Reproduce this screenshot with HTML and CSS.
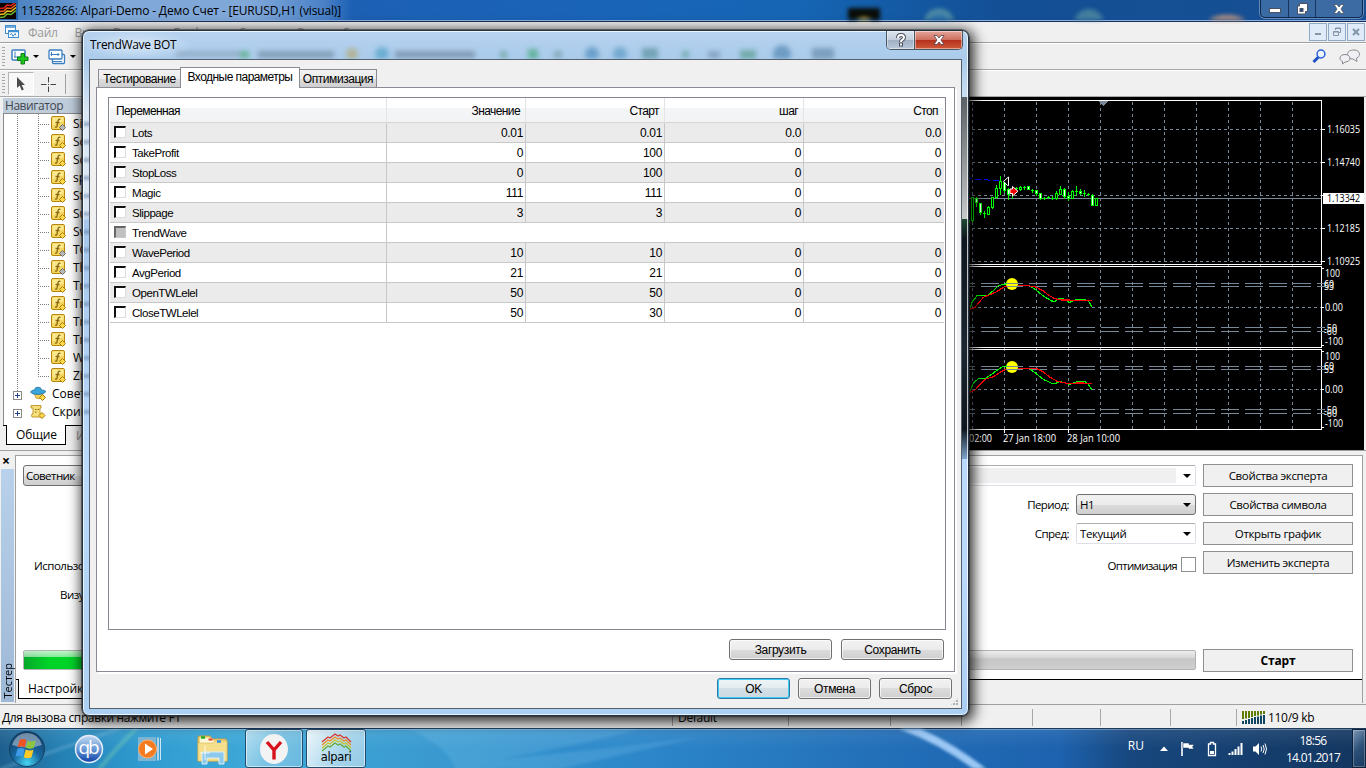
FILE: index.html
```html
<!DOCTYPE html>
<html lang="ru">
<head>
  <meta charset="UTF-8">
  <title>TrendWave BOT</title>
  <link rel="stylesheet" href="styles.css">
</head>
<body>
  <svg class="sprite">
    <symbol id="fx" viewBox="0 0 16 16">
      <rect x=".5" y=".5" width="13" height="13" rx="1.500" fill="#f3d45c" stroke="#b8860b"/>
      <path d="M1.500 1.500h11v4l-11 4z" fill="#fbe88f"/>
      <path d="M9.500 3.500q-2-1-2.500 1.500l-1 5q-.4 1.600-2 1M4.500 6.500h4" fill="none" stroke="#8a6a10" stroke-width="1.300"/>
      <path d="M11.500 8.500l3 3-3 3-3-3z" fill="#ffd94a" stroke="#a87c08"/>
    </symbol>
    <symbol id="fxg" viewBox="0 0 16 16">
      <rect x=".5" y=".5" width="13" height="13" rx="1.500" fill="#f3d45c" stroke="#b8860b"/>
      <path d="M1.500 1.500h11v4l-11 4z" fill="#fbe88f"/>
      <path d="M9.500 3.500q-2-1-2.500 1.500l-1 5q-.4 1.600-2 1M4.500 6.500h4" fill="none" stroke="#8a6a10" stroke-width="1.300"/>
      <path d="M11.500 8.500l3 3-3 3-3-3z" fill="#b9b9b9" stroke="#707070"/>
    </symbol>
  </svg>

  <div class="desktop">
    <!-- terminal window -->
    <div class="titlebar">
      <svg class="logo" width="16" height="16" viewBox="0 0 16 16">
        <rect width="16" height="16" fill="#100400"/>
        <g fill="none" stroke-width="1.500">
          <path d="M0 5.500l4-.5 3-3 4 .5 5-3.500" stroke="#e2231a"/>
          <path d="M0 8.500l4-.5 3-3 4 .5 5-4" stroke="#f0621e"/>
          <path d="M0 11.500l4-.5 3-3 4 .5 5-4" stroke="#e5c51f"/>
          <path d="M0 14.500l4-.5 3-3 4 .5 5-4" stroke="#69b52d"/>
        </g>
      </svg>
      <span class="title">11528266: Alpari-Demo - Демо Счет - [EURUSD,H1 (visual)]</span>
      <svg class="blobs" width="520" height="20" viewBox="700 0 520 20">
        <rect x="848" y="8" width="32" height="16" fill="#0a0d08"/>
        <path d="M856 20q8-6 16 0z" fill="#c9a63a"/>
        <circle cx="939" cy="24" r="13" fill="#3b7fae" stroke="#5f9aa5" stroke-width="5" opacity=".8"/>
        <circle cx="1089" cy="24" r="15" fill="#4f8aa0" opacity=".8"/>
      </svg>
      <svg class="blobs next" width="60" height="20" viewBox="1200 0 60 20">
        <ellipse cx="1227" cy="26" rx="22" ry="11" fill="#b8927e"/>
      </svg>
      <div class="winbtns">
        <span class="wb-min"><svg width="12" height="12"><rect x=".5" y="5.500" width="11" height="4" fill="#fff" stroke="#4a5362"/></svg></span>
        <span class="wb-max"><svg width="12" height="12"><path d="M3.500 .5h8v8h-2v2.500h-8v-8h2z" fill="#fff" stroke="#4a5362"/><rect x="4" y="5.500" width="3" height="3" fill="#1f4a86" stroke="#4a5362"/></svg></span>
        <span class="wb-close"><svg width="12" height="12"><path d="M1 1.500h3l2 2.500 2-2.500h3l-3 4.500 3 4.500h-3l-2-2.500-2 2.500h-3l3-4.500z" fill="#fff" stroke="#4a5362" stroke-width=".8"/></svg></span>
      </div>
    </div>

    <div class="menubar">
      <svg width="16" height="16" viewBox="0 0 16 16"><g fill="#fff" stroke="#3f8fd2"><rect x="1.500" y="1.500" width="10" height="8"/><rect x="4.500" y="6.500" width="10" height="7"/></g><path d="M1 3h11M4 7.500h11" stroke="#3f8fd2" stroke-width="1.500"/><path d="M6 11l1.500-1.500 1.500 3 2-3 1 2" fill="none" stroke="#3f8fd2"/></svg>
      <nav>
        <span>Файл</span><span>Вид</span><span>Вставка</span><span>Графики</span><span>Сервис</span><span>Окно</span><span>Справка</span>
      </nav>
      <div class="mdi">
        <span><svg width="10" height="10"><rect x="2" y="6" width="6" height="2" fill="#8496a8"/></svg></span>
        <span><svg width="10" height="10"><path d="M3.500 3v-2h5v4.500h-2M1.500 4.500h5v4h-5zM3 1.500h6M1 5h6" fill="none" stroke="#8496a8"/></svg></span>
        <span><svg width="10" height="10"><path d="M2 2l6 6M8 2l-6 6" stroke="#8496a8" stroke-width="2"/></svg></span>
      </div>
    </div>

    <div class="toolbar">
      <i class="grip"></i>
      <svg width="18" height="16" viewBox="0 0 18 16"><rect x="1" y="1" width="13" height="10" rx="1" fill="#fff" stroke="#3b7fc0" stroke-width="1.500"/><path d="M4 2.500v6M3 8h8" stroke="#3b7fc0"/><path d="M10 4.500h3.500v3.500h3.500v3.500h-3.500v3.500H10v-3.500H6.500V8H10z" fill="#22c41f" stroke="#0a7d12"/></svg>
      <i class="drop"></i>
      <svg class="gap" width="18" height="16" viewBox="0 0 18 16"><g fill="#fff" stroke="#3b7fc0" stroke-width="1.300"><rect x="4.500" y="5.500" width="12" height="9" rx="1"/><rect x="1" y="1" width="13" height="9" rx="1"/></g><path d="M3.500 3v4M2.500 5.500h9M10 4v3M5 12.500h9" stroke="#3b7fc0"/></svg>
      <i class="drop"></i>
      <div class="right-tools">
        <svg width="15" height="15" viewBox="0 0 15 15"><path d="M7 7.500l-5.500 5.500" stroke="#1d4fc4" stroke-width="3"/><circle cx="9" cy="5" r="3.900" fill="#eef5ff" stroke="#2a62d8" stroke-width="1.500"/></svg>
        <svg width="22" height="16" viewBox="0 0 22 16"><g fill="#f0f0f4" stroke="#8a8a8f"><path d="M15 1c-4 0-6.500 1.500-6.500 4.500S11 10 14 10l4 2.500-.5-3.500c2-.8 3-2 3-3.500C20.500 2.500 18.500 1 15 1z"/><path d="M6 5.500c-3 0-5 1.500-5 3.800 0 1.500 1 2.600 2.500 3l0 2.700 2.500-2c3 0 5-1.500 5-3.700S9 5.500 6 5.500z"/></g></svg>
      </div>
    </div>
    <div class="toolbar second">
      <i class="grip"></i>
      <span class="pressed"><svg width="12" height="16" viewBox="0 0 12 16"><path d="M2 1v11l2.600-2.400L6.800 14.500l2-1L6.700 9H10z" fill="#4a4a4a"/></svg></span>
      <svg class="cross" width="16" height="16"><path d="M8.500 1v5.500M8.500 10.500V16M1 8.500h5.500M10.500 8.500H16M8 8.500h1" stroke="#444"/></svg>
      <i class="sep"></i>
    </div>

    <div class="main">
      <div class="navigator">
        <div class="nav-head">Навигатор</div>
        <div class="tree">
          <div class="leaf"><svg><use href="#fxg"/></svg>Si</div>
          <div class="leaf"><svg><use href="#fx"/></svg>Sc</div>
          <div class="leaf"><svg><use href="#fx"/></svg>Sc</div>
          <div class="leaf"><svg><use href="#fx"/></svg>sp</div>
          <div class="leaf"><svg><use href="#fx"/></svg>St</div>
          <div class="leaf"><svg><use href="#fx"/></svg>Su</div>
          <div class="leaf"><svg><use href="#fx"/></svg>Sw</div>
          <div class="leaf"><svg><use href="#fxg"/></svg>TC</div>
          <div class="leaf"><svg><use href="#fxg"/></svg>Th</div>
          <div class="leaf"><svg><use href="#fx"/></svg>Tr</div>
          <div class="leaf"><svg><use href="#fx"/></svg>Tr</div>
          <div class="leaf"><svg><use href="#fx"/></svg>Tr</div>
          <div class="leaf"><svg><use href="#fx"/></svg>Tr</div>
          <div class="leaf"><svg><use href="#fx"/></svg>W</div>
          <div class="leaf"><svg><use href="#fx"/></svg>Zi</div>
          <div class="branch"><i></i>
            <svg width="17" height="16" viewBox="0 0 17 16"><path d="M4 7q4 3 9 0l-1 4q-3 3-6 1z" fill="#f5cf55" stroke="#b58712" stroke-width=".7"/><path d="M.5 6Q2 3.500 4.500 4 5 .7 8 1.200q3-.4 3.500 2.800 3-.2 4.500 1.500-2 3-8 3T.5 6z" fill="#39a3da" stroke="#1b6c9c" stroke-width=".7"/><path d="M12.500 8.500l3 3-3 3-3-3z" fill="#ffd94a" stroke="#a87c08"/></svg>Советники</div>
          <div class="branch"><i></i>
            <svg width="17" height="16" viewBox="0 0 17 16"><path d="M1 1.500h10v2.500h-1v6h2v3H2q-1-1.500 0-3h1V4H1z" fill="#f8df7d" stroke="#b58712" stroke-width=".8"/><path d="M5 5.500h1.500M7.500 5.500H9M5 8h1.500" stroke="#8a6a10"/><path d="M12 8.500l3 3-3 3-3-3z" fill="#ffd94a" stroke="#a87c08"/></svg>Скрипты</div>
        </div>
        <div class="nav-tabs"><span class="on">Общие</span><span>И</span></div>
      </div>

      <svg class="chart" width="1164" height="353" viewBox="200 97 1164 353">
        <rect x="200" y="97" width="1164" height="353" fill="#000"/>
        <g class="grid">
          <path d="M972.500 102V430M1004.500 102V430M1036.500 102V430M1068.500 102V430M1100.500 102V430M1132.500 102V430M1164.500 102V430M1196.500 102V430M1228.500 102V430M1260.500 102V430M1292.500 102V430"/>
          <path d="M966 129.500H1321M966 162.500H1321M966 195.500H1321M966 228.500H1321M966 261.500H1321M966 307.500H1321M966 389.500H1321"/>
        </g>
        <path class="price" d="M966 198.500H1321"/>
        <path class="frame" d="M960 100.500H1321.500V264.500H960M960 266.500H1321.500V347.500H960M960 349.500H1321.500V429.500H960"/>
        <path class="frame" d="M1321 129.500h4M1321 162.500h4M1321 195.500h4M1321 228.500h4M1321 261.500h4M1321 268.500h3M1321 307.500h3M1321 345.500h3M1321 351.500h3M1321 389.500h3M1321 427.500h3M1004.500 430v3M1068.500 430v3"/>
        <path d="M1098 101h10l-5 5z" fill="#778899"/>
        <!-- candles -->
        <path d="M966 178.500l36 2.500" stroke="#00f" stroke-dasharray="6 3"/>
        <path class="wick" d="M969.500 220v3M972.500 197v25M976.500 197v10M980.500 203v12M984.500 211v7M988.500 206v9M992.500 197v12M996.500 185v14M1000.500 176v19M1004.500 181v12M1008.500 188v12M1012.500 187v12M1016.500 187v5M1020.500 186v5M1024.500 186v4M1028.500 186v4M1032.500 189v4M1036.500 190v6M1040.500 193v7M1044.500 197v3M1048.500 196v3M1052.500 196v4M1056.500 191v9M1060.500 186v9M1064.500 188v11M1068.500 192v9M1072.500 190v9M1076.500 186v10M1080.500 189v6M1084.500 190v7M1088.500 193v3M1092.500 194v12M1096.500 198v8"/>
        <path class="up" d="M971.500 197.500h2v23h-2zM987.500 207.500h2v7h-2zM991.500 197.500h2v10h-2zM995.500 188.500h2v9h-2zM999.500 181.500h2v7h-2zM1019.500 187.500h2v2h-2zM1055.500 193.500h2v5h-2zM1059.500 189.500h2v5h-2zM1071.500 191.500h2v7h-2zM1095.500 198.500h2v7h-2z"/>
        <path class="down" d="M975.500 198.500h2v4h-2zM979.500 203.500h2v9h-2zM1003.500 182.500h2v8h-2zM1007.500 189.500h2v5h-2zM1027.500 186.500h2v3h-2zM1035.500 190.500h2v3h-2zM1039.500 193.500h2v5h-2zM1063.500 189.500h2v7h-2zM1067.500 196.500h2v2h-2zM1079.500 191.500h2v2h-2zM1091.500 195.500h2v10h-2z"/>
        <path class="wick" d="M983 213.500h3M1015 188.500h3M1023 187.500h3M1031 190.500h3M1043 198.500h3M1047 197.500h3M1051 198.500h3M1075 191.500h3M1083 193.500h3M1087 194.500h3"/>
        <path class="mark" d="M1008.500 177v8.500h-1l-4-4.200z" fill="#000" stroke="#fff"/>
        <path class="mark" d="M1010 189h2.500v-2.500l5.500 4.700-5.500 4.800v-2.500H1010z" fill="#f00000" stroke="#fff"/>
        <!-- oscillators -->
        <circle class="mark" cx="1012" cy="284" r="6" fill="#ff0"/>
        <circle class="mark" cx="1012" cy="367" r="6" fill="#ff0"/>
        <path class="level" d="M957 283.500H1325M957 286.500H1325M957 327.500H1325M957 331.500H1325M957 366.500H1325M957 369.500H1325M957 409.500H1325M957 413.500H1325"/>
        <g class="wave" transform="translate(940 260) scale(.3333)">
          <path stroke="#0f0" d="M90 146L97 125 112 106 130 107 145 105 160 92 175 77 200 71M270 78L285 88 310 108 335 123 345 124 358 115 370 117 388 127 410 119 436 119 446 124 455 140M90 394L100 370 115 356 135 356 155 343 175 328 190 319 200 318M270 327L290 342 310 358 335 370 348 370 358 365 370 367 388 373 410 366 432 364 443 370 455 389"/>
          <path stroke="#f00" d="M90 148L105 142 130 112 150 104 170 95 190 82 200 78M234 77L265 77 290 82 310 93 325 105 345 116 365 120 455 121M90 397L105 390 135 358 160 350 180 337 197 328M234 325L290 326 310 336 330 352 352 364 380 370 420 369 455 370"/>
        </g>
        <rect x="1323" y="193" width="41" height="11" fill="#fff"/>
        <g class="axis">
          <text x="1327" y="133" textLength="33" lengthAdjust="spacingAndGlyphs">1.16035</text>
          <text x="1327" y="166" textLength="33" lengthAdjust="spacingAndGlyphs">1.14740</text>
          <text x="1327" y="202" textLength="33" lengthAdjust="spacingAndGlyphs" fill="#000">1.13342</text>
          <text x="1327" y="232" textLength="33" lengthAdjust="spacingAndGlyphs">1.12185</text>
          <text x="1327" y="265" textLength="33" lengthAdjust="spacingAndGlyphs">1.10925</text>
          <text x="1325" y="277" textLength="15" lengthAdjust="spacingAndGlyphs">100</text>
          <text x="1324" y="288" textLength="10" lengthAdjust="spacingAndGlyphs">60</text>
          <text x="1324" y="290" textLength="10" lengthAdjust="spacingAndGlyphs">53</text>
          <text x="1325" y="311" textLength="18" lengthAdjust="spacingAndGlyphs">0.00</text>
          <text x="1324" y="332" textLength="13" lengthAdjust="spacingAndGlyphs">-50</text>
          <text x="1324" y="335" textLength="13" lengthAdjust="spacingAndGlyphs">-60</text>
          <text x="1325" y="345" textLength="18" lengthAdjust="spacingAndGlyphs">-100</text>
          <text x="1325" y="360" textLength="15" lengthAdjust="spacingAndGlyphs">100</text>
          <text x="1324" y="370" textLength="10" lengthAdjust="spacingAndGlyphs">60</text>
          <text x="1324" y="373" textLength="10" lengthAdjust="spacingAndGlyphs">53</text>
          <text x="1325" y="393" textLength="18" lengthAdjust="spacingAndGlyphs">0.00</text>
          <text x="1324" y="414" textLength="13" lengthAdjust="spacingAndGlyphs">-50</text>
          <text x="1324" y="417" textLength="13" lengthAdjust="spacingAndGlyphs">-60</text>
          <text x="1325" y="427" textLength="18" lengthAdjust="spacingAndGlyphs">-100</text>
          <text x="969" y="442" textLength="23" lengthAdjust="spacingAndGlyphs">02:00</text>
          <text x="1003" y="442" textLength="53" lengthAdjust="spacingAndGlyphs">27 Jan 18:00</text>
          <text x="1067" y="442" textLength="53" lengthAdjust="spacingAndGlyphs">28 Jan 10:00</text>
        </g>
      </svg>
    </div>

    <div class="tester">
      <div class="side"><b>×</b><div class="strip"><span>Тестер</span></div></div>
      <div class="pane">
        <div class="form">
          <div class="fields">
            <div class="row"><span class="select grey kind">Советник</span><span class="select wide"><em></em></span></div>
            <div class="row"><label>Период:</label><span class="select grey">H1</span></div>
            <div class="row"><label>Спред:</label><span class="select">Текущий</span></div>
            <div class="row opt"><span class="left">Использовать дату</span><label>Оптимизация</label><i class="box"></i></div>
            <div class="row vis"><span class="left">Визуализация</span></div>
            <div class="progress"><div class="done"></div></div>
          </div>
          <div class="actions">
            <button>Свойства эксперта</button>
            <button>Свойства символа</button>
            <button>Открыть график</button>
            <button>Изменить эксперта</button>
            <button class="start">Старт</button>
          </div>
        </div>
        <div class="pane-tabs"><span>Настройки</span></div>
      </div>
    </div>

    <div class="status">
      <span class="hint">Для вызова справки нажмите F1</span>
      <span class="c1">Default</span><span class="c2"></span><span class="c3"></span><span class="c4"></span><span class="c5"></span><span class="c6"></span><span class="c7"></span>
      <span class="traffic"><svg width="24" height="14" viewBox="0 0 24 14"><path d="M1 0v8M4 0v7.500M7 0v7M10 0v6M13 0v5M16 0v4.500M19 0v3.500M22 0v3" stroke="#5f7d00" stroke-width="2"/><path d="M1 13v-3M4 13v-4M7 13V8M10 13V7M13 13V6M16 13V5.500M19 13V4.500M22 13V4" stroke="#0f4560" stroke-width="2"/></svg>110/9 kb</span>
    </div>

    <div class="taskbar">
      <svg class="aurora" width="1366" height="40" viewBox="0 0 1366 40" preserveAspectRatio="none">
        <path d="M0 40Q60 20 130 -4" stroke="#9fd0ee" stroke-width="3" opacity=".3" fill="none"/>
        <path d="M96 44Q115 20 140 -4" stroke="#8fe0b0" stroke-width="4" opacity=".35" fill="none"/>
        <path d="M410 0Q450 20 455 40H560L700 8Q560 25 500 30Q600 12 640 0z" fill="#8fd0f5" opacity=".18"/>
        <path d="M900 -4Q945 12 985 44" stroke="#a9d2fb" stroke-width="8" fill="none" opacity=".9"/>
      </svg>
      <span class="orb"><svg width="38" height="38" viewBox="0 0 38 38"><defs><radialGradient id="orb" cx=".5" cy=".9" r=".9"><stop offset="0" stop-color="#46d5f2"/><stop offset=".45" stop-color="#17679f"/><stop offset="1" stop-color="#123a63"/></radialGradient></defs><circle cx="19" cy="19" r="17.500" fill="url(#orb)" stroke="#15405f"/><path d="M4 15Q8 3 19 3t15 12q-15 5-30 0z" fill="#fff" opacity=".4"/><path d="M11.500 10q3.500-2 7 0l-1.700 7.500q-3.500-1.800-7.200 0z" fill="#ee5426"/><path d="M19.700 10.700q3.600 1.800 8-.2l-2 7.500q-3.800 1.700-7.800-.2z" fill="#8cc63f"/><path d="M9.300 19q3.600-1.800 7.200 0l-1.800 7.700q-3.600-1.800-7.200 0z" fill="#3e9be8"/><path d="M17.700 19.500q4 1.800 7.800.2l-2 7.500q-4 1.800-7.700 0z" fill="#ffc926"/></svg></span>
      <span class="qb"><svg width="30" height="30" viewBox="0 0 30 30"><defs><linearGradient id="qb" x1="0" y1="0" x2="0" y2="1"><stop offset="0" stop-color="#c3daf2"/><stop offset=".5" stop-color="#6a9bd8"/><stop offset="1" stop-color="#0d3fa8"/></linearGradient></defs><circle cx="15" cy="15" r="13.500" fill="url(#qb)" stroke="#e8eef7" stroke-width="1.500"/><text x="4.500" y="20" textLength="21" fill="#fff">qb</text></svg></span>
      <span class="wmp"><svg width="28" height="26" viewBox="0 0 28 26"><path d="M1 1h18v24H1z" fill="#7cb4d4"/><path d="M20 1.500h2v23h-2z" fill="#b5d3e4"/><path d="M23.500 2v22" stroke="#cbe6f5"/><circle cx="10.500" cy="13" r="9" fill="#f47b20" stroke="#ffb071"/><path d="M8 7.500v11l8-5.500z" fill="#fff"/></svg></span>
      <span class="folder"><svg width="34" height="32" viewBox="0 0 34 32"><path d="M2 28V5q0-2 2-2h10l2 3h13q2 0 2 3v19z" fill="#f2d57a" stroke="#c9a144"/><path d="M4 5h12l1 3h12v17H4z" fill="#fff7d6"/><path d="M2 10h15l2-2h12v20H2z" fill="#f6df8c" stroke="#d8b557" stroke-width=".6"/><path d="M5 4.500h4" stroke-width="2.500" stroke="#1eab2b"/><path d="M12.500 6.500h4" stroke="#e0382c" stroke-width="2"/><path d="M21 8.500h4" stroke="#2c8fe8" stroke-width="2.500"/><path d="M6 31V20q0-1 1-1h20q1 0 1 1v11h-5v-6H11v6z" fill="#8cc9ec" stroke="#d6effb"/><path d="M9 13v14M4 20h10" stroke="#fff" opacity=".8"/></svg></span>
      <span class="task"><svg width="30" height="32" viewBox="0 0 30 32"><ellipse cx="15" cy="16" rx="14" ry="15" fill="#f3f3f3"/><path d="M8 9l7 8 7-8M15 16v10.500" fill="none" stroke="#d8121b" stroke-width="3.400"/></svg></span>
      <span class="task on"><svg width="32" height="20" viewBox="0 0 32 20"><g fill="none" stroke-width="1.200"><path d="M2 9l6-5 2 1 5-4 3 2 2-1 4 3 2-1 5 5" stroke="#d8352a"/><path d="M2 12l6-5 2 1 5-4 3 2 2-1 4 3 2-1 5 5" stroke="#ee8c22"/><path d="M2 15l6-5 2 1 5-4 3 2 2-1 4 3 2-1 5 5" stroke="#c9c32a"/><path d="M2 18l6-5 2 1 5-4 3 2 2-1 4 3 2-1 5 5" stroke="#64aa35"/></g></svg><em>alpari</em></span>
      <div class="tray">
        <span class="lang">RU</span>
        <svg class="up-arrow" width="8" height="5"><path d="M0 5l4-4.500L8 5z" fill="#fff"/></svg>
        <svg class="flag" width="16" height="16" viewBox="0 0 16 16"><path d="M2 1v14" stroke="#fff" stroke-width="1.600"/><path d="M3 2h6v1.500h5l-1.500 2.500 1.500 2H8.500V7H3z" fill="#fff" stroke="#17375f" stroke-width=".5"/></svg>
        <svg class="battery" width="10" height="16" viewBox="0 0 10 16"><path d="M3.500 1.500h3v1.500h2v11.500h-7V3h2z" fill="none" stroke="#fff" stroke-width="1.300"/><path d="M3 10h4v3H3z" fill="#fff"/></svg>
        <svg class="signal" width="16" height="12" viewBox="0 0 16 12"><path d="M1.500 12v-2M4.500 12V8.500M7.500 12V6M10.500 12V3.500M13.500 12V0" stroke="#fff" stroke-width="2"/></svg>
        <svg class="sound" width="15" height="14" viewBox="0 0 15 14"><path d="M1 4.500h2.500L7 1v12L3.500 9.500H1z" fill="#fff"/><path d="M9 4.500q1.500 2.500 0 5M11 3q2.500 4 0 8M13 1.500q3 5.500 0 11" fill="none" stroke="#fff"/></svg>
        <div class="clock"><div>18:56</div><div>14.01.2017</div></div>
        <i class="peek"></i>
      </div>
    </div>

    <!-- expert properties dialog -->
    <div class="dialog">
      <div class="caption">
        <svg class="glass" width="885" height="28" viewBox="83 31 885 28">
          <g opacity=".5">
            <rect x="176" y="51" width="70" height="6" fill="#7f93a8"/><rect x="240" y="51" width="9" height="7" fill="#2a9c4b"/><rect x="258" y="51" width="76" height="7" fill="#5f7286"/>
            <rect x="395" y="51" width="80" height="7" fill="#566a80"/><circle cx="352" cy="54" r="6" fill="#b99a44"/><circle cx="382" cy="54" r="7" fill="#2f8fb8"/>
            <rect x="500" y="51" width="7" height="7" fill="#4d8f78"/><rect x="528" y="49" width="10" height="10" fill="#1f9c55"/><rect x="554" y="51" width="8" height="7" fill="#5c8a86"/>
            <circle cx="592" cy="54" r="7" fill="#2b76ad"/><circle cx="620" cy="54" r="7" fill="#3a86b5"/><rect x="642" y="48" width="16" height="11" fill="#3a7a80"/>
            <rect x="682" y="51" width="7" height="7" fill="#47917a"/><rect x="708" y="51" width="12" height="7" fill="#5f7f99"/><rect x="740" y="50" width="16" height="9" fill="#3b8a6d"/>
            <circle cx="782" cy="54" r="9" fill="#2f6d9b"/><rect x="812" y="48" width="22" height="11" fill="#4d7392"/>
          </g>
        </svg>
        <span>TrendWave BOT</span>
        <div class="capbtns">
          <i class="help"><svg width="12" height="14"><path d="M3 5q0-3 3-3t3 2.500q0 1.500-1.700 2.300Q6 7.500 6 9" fill="none" stroke="#4a4f5c" stroke-width="4"/><rect x="4" y="9.500" width="4" height="4" fill="#4a4f5c"/><path d="M3 5q0-3 3-3t3 2.500q0 1.500-1.700 2.300Q6 7.500 6 9" fill="none" stroke="#fff" stroke-width="2"/><rect x="5" y="10.500" width="2" height="2" fill="#fff"/></svg></i>
          <i class="close"><svg width="12" height="12"><path d="M1 1.500h3l2 2.500 2-2.500h3l-3 4.500 3 4.500h-3l-2-2.500-2 2.500h-3l3-4.500z" fill="#fff" stroke="#52404a" stroke-width=".8"/></svg></i>
        </div>
      </div>
      <div class="client">
        <div class="tabs"><span>Тестирование</span><span class="on">Входные параметры</span><span>Оптимизация</span></div>
        <div class="page">
          <div class="list">
            <div class="tr th"><span>Переменная</span><span>Значение</span><span>Старт</span><span>шаг</span><span>Стоп</span></div>
            <div class="tr"><span><i></i>Lots</span><span>0.01</span><span>0.01</span><span>0.0</span><span>0.0</span></div>
            <div class="tr"><span><i></i>TakeProfit</span><span>0</span><span>100</span><span>0</span><span>0</span></div>
            <div class="tr"><span><i></i>StopLoss</span><span>0</span><span>100</span><span>0</span><span>0</span></div>
            <div class="tr"><span><i></i>Magic</span><span>111</span><span>111</span><span>0</span><span>0</span></div>
            <div class="tr"><span><i></i>Slippage</span><span>3</span><span>3</span><span>0</span><span>0</span></div>
            <div class="tr head"><span><i></i>TrendWave</span></div>
            <div class="tr"><span><i></i>WavePeriod</span><span>10</span><span>10</span><span>0</span><span>0</span></div>
            <div class="tr"><span><i></i>AvgPeriod</span><span>21</span><span>21</span><span>0</span><span>0</span></div>
            <div class="tr"><span><i></i>OpenTWLelel</span><span>50</span><span>50</span><span>0</span><span>0</span></div>
            <div class="tr"><span><i></i>CloseTWLelel</span><span>50</span><span>30</span><span>0</span><span>0</span></div>
          </div>
          <div class="page-btns"><button>Загрузить</button><button>Сохранить</button></div>
        </div>
        <div class="dlg-btns"><button class="ok">OK</button><button>Отмена</button><button>Сброс</button></div>
        <i class="resize"></i>
      </div>
    </div>
  </div>
</body>
</html>
```
FILE: styles.css
```css
* {
  box-sizing: border-box;
}
body {
  margin: 0;
  overflow: hidden;
  font-family: "Open Sans", "Noto Sans", sans-serif;
  font-size: 12px;
  color: #000;
}
svg {
  display: block;
  flex: none;
}
i, em {
  font-style: normal;
}
.sprite {
  position: absolute;
  width: 0;
  height: 0;
}
.desktop {
  position: relative;
  width: 1366px;
  height: 768px;
  overflow: hidden;
  display: flex;
  flex-direction: column;
  background: #f0f0f0;
  white-space: nowrap;
}

/* main window */
.titlebar {
  height: 22px;
  display: flex;
  align-items: flex-start;
  background: linear-gradient(to right, #2162ab, #1c60b4 350px, #1a64b8 600px, #1565b4 800px, #134f95 1000px, #174f92 1366px);
  border-bottom: 1px solid #17305a;
  box-shadow: inset 0 -1px 0 #8fb0dc;
}
.logo {
  margin-top: 3px;
}
.title {
  margin-left: 2px;
  padding: 0 8px 0 3px;
  height: 20px;
  line-height: 21px;
  letter-spacing: -0.15px;
  width: 334px;
  background: linear-gradient(to right, rgba(120,165,215,.5), rgba(165,195,232,.72) 30%, rgba(165,195,232,.72) 70%, rgba(110,155,215,.55) 92%, rgba(100,150,210,0));
}
.blobs {
  margin-left: 348px;
  filter: blur(2px);
}
.blobs.next {
  margin-left: -20px;
}
.winbtns {
  margin-left: auto;
  margin-right: 3px;
  height: 18px;
  display: flex;
  border: 1px solid #10284d;
  border-top: 0;
  border-radius: 0 0 5px 5px;
  background: rgba(255,255,255,.16);
  box-shadow: 0 0 0 1px rgba(160,190,225,.55);
}
.winbtns span {
  display: flex;
  align-items: center;
  justify-content: center;
  border-right: 1px solid #17345f;
  width: 28px;
}
.winbtns .wb-max { width: 27px; }
.winbtns .wb-close { width: 46px; border: 0; }
.menubar {
  height: 21px;
  display: flex;
  align-items: center;
  padding-left: 4px;
  border-bottom: 1px solid #a0a0a0;
  color: #9a9a9a;
}
.menubar nav {
  display: flex;
  gap: 17px;
  margin-left: 8px;
  letter-spacing: -0.3px;
}
.mdi {
  margin-left: auto;
  display: flex;
  gap: 1px;
  padding-right: 1px;
}
.mdi span {
  width: 18px;
  height: 18px;
  border: 1px solid #8fa9c4;
  background: #dfebf8;
  display: flex;
  align-items: center;
  justify-content: center;
}
.toolbar {
  height: 27px;
  display: flex;
  align-items: center;
  padding-left: 2px;
  border-top: 1px solid #fff;
  border-bottom: 1px solid #a8a8a8;
}
.grip {
  width: 3px;
  height: 20px;
  margin-right: 6px;
  background: repeating-linear-gradient(#a8a8a8 0 1px, #f0f0f0 1px 3px);
}
.drop {
  width: 0;
  margin-left: 4px;
  border: 3px solid transparent;
  border-top-color: #000;
  border-bottom: 0;
}
.gap {
  margin-left: 9px;
}
.right-tools {
  margin-left: auto;
  display: flex;
  gap: 12px;
  padding-right: 5px;
}
.pressed {
  width: 26px;
  height: 23px;
  margin-left: -3px;
  display: flex;
  align-items: center;
  justify-content: center;
  border: 1px solid #b5b5b5;
  border-right-color: #fff;
  border-bottom-color: #fff;
  background: #f8f8f8;
}
.cross {
  margin-left: 6px;
}
.sep {
  width: 1px;
  height: 20px;
  margin-left: 9px;
  background: #a0a0a0;
}
.main {
  height: 353px;
  display: flex;
}
.navigator {
  width: 200px;
  height: 353px;
  padding-left: 3px;
  border-top: 1px solid #f8f8f8;
}
.nav-head {
  height: 15px;
  line-height: 15px;
  padding-left: 2px;
  background: #bfcddb;
  color: #3f4750;
  letter-spacing: -0.45px;
}
.tree {
  height: 312px;
  padding-top: 1px;
  background: repeating-linear-gradient(#808080 0 1px, #fff 1px 2px) 13px 0 / 1px 282px no-repeat,
    repeating-linear-gradient(#808080 0 1px, #fff 1px 2px) 34px 0 / 1px 262px no-repeat, #fff;
  border: 1px solid #8a8a8a;
  border-bottom: 0;
}
.leaf, .branch {
  height: 18px;
  line-height: 18px;
  display: flex;
  align-items: center;
}
.leaf::before {
  content: "";
  width: 11px;
  height: 1px;
  margin: 0 2px 0 34px;
  background: repeating-linear-gradient(to right, #808080 0 1px, #fff 1px 2px);
}
.leaf svg {
  width: 16px;
  height: 16px;
  margin-right: 6px;
}
.branch {
  padding-left: 9px;
}
.branch i {
  width: 9px;
  height: 9px;
  margin-top: 2px;
  border: 1px solid #8a8a8a;
  background: linear-gradient(#24418c, #24418c) center / 5px 1px no-repeat,
    linear-gradient(#24418c, #24418c) center / 1px 5px no-repeat, #fff;
}
.branch svg {
  margin: 0 5px 0 8px;
}
.nav-tabs {
  height: 20px;
  display: flex;
  border-top: 1px solid #000;
  line-height: 19px;
  color: #8a8a8a;
}
.nav-tabs span {
  padding-left: 10px;
}
.nav-tabs .on {
  width: 60px;
  height: 20px;
  margin: -1px 0 0 3px;
  padding: 0 0 0 9px;
  color: #000;
  background: #fff;
  border: 1px solid #000;
  border-top: 0;
  letter-spacing: -0.15px;
}

/* chart */
.chart {
  shape-rendering: crispEdges;
}
.grid {
  stroke: #778899;
  stroke-dasharray: 3 3;
}
.price {
  stroke: #778899;
}
.level {
  stroke: #778899;
  stroke-dasharray: 18 6;
  fill: none;
}
.frame {
  stroke: #fff;
  fill: none;
}
.wick, .up, .down {
  stroke: #0f0;
  fill: none;
}
.up { fill: #000; }
.down { fill: #fff; }
.mark {
  shape-rendering: auto;
}
.wave {
  fill: none;
  stroke-width: 3.5;
}
.axis {
  fill: #fff;
  font: 10.5px "Open Sans", "Noto Sans", sans-serif;
}

/* tester */
.tester {
  height: 255px;
  display: flex;
  padding: 4px 3px 0 0;
  border-top: 1px solid #a0a0a0;
  border-bottom: 1px solid #a0a0a0;
}
.side {
  width: 15px;
  display: flex;
  flex-direction: column;
}
.side b {
  height: 14px;
  line-height: 11px;
  padding-left: 2px;
  font-size: 14px;
}
.strip {
  width: 13px;
  height: 233px;
  margin-left: 1px;
  flex: none;
  display: flex;
  align-items: flex-end;
  background: linear-gradient(#b9d1ea, #9db8d6);
}
.strip span {
  writing-mode: vertical-rl;
  transform: rotate(180deg);
  line-height: 13px;
  padding-top: 3px;
  font-size: 11px;
}
.pane {
  flex: 1;
  border: 1px solid #a0a0a0;
  border-bottom: 0;
  height: 248px;
  background: #f0f0f0;
}
.form {
  height: 224px;
  display: flex;
  gap: 7px;
  padding: 8px 9px 0 7px;
  background: #fff;
  border-bottom: 1px solid #000;
  font-size: 11.5px;
}
.fields {
  flex: 1;
  display: flex;
  flex-direction: column;
  padding-top: 1px;
}
.row {
  height: 21px;
  margin-bottom: 8px;
  display: flex;
  align-items: center;
  justify-content: flex-end;
}
.row label {
  margin-right: 7px;
  letter-spacing: -0.55px;
}
.select {
  width: 120px;
  height: 21px;
  padding: 0 4px 0 3px;
  border: 1px solid #dcdfe6;
  border-top-color: #abadb3;
  border-radius: 2px;
  display: flex;
  align-items: center;
  justify-content: space-between;
  line-height: 17px;
  letter-spacing: -0.45px;
}
.select::after {
  content: "";
  border: 4px solid transparent;
  border-top-color: #000;
  border-bottom: 0;
}
.select.grey {
  border-color: #707070;
  border-radius: 3px;
  background: linear-gradient(#f2f2f2, #ebebeb 50%, #dcdcdc 50%, #cfcfcf);
}
.select.kind {
  width: 130px;
  margin-right: 8px;
  padding-left: 2px;
  letter-spacing: -0.55px;
}
.select.wide {
  flex: 1;
}
.select em {
  flex: 1;
  height: 15px;
  margin-right: 7px;
  background: #f0f0f0;
}
.opt {
  margin-top: 3px;
}
.opt label {
  margin-right: 4px;
  letter-spacing: -0.72px;
}
.left {
  margin-right: auto;
  margin-left: 11px;
  letter-spacing: -0.5px;
}
.vis .left {
  margin-left: 37px;
}
.box {
  width: 15px;
  height: 15px;
  margin-top: -3px;
  border: 1px solid #8e8f8f;
}
.progress {
  height: 20px;
  margin-top: 37px;
  border: 1px solid #b2b2b2;
  border-radius: 2px;
  background: linear-gradient(#eee, #d8d8d8 35%, #c6c6c6 45%, #cfcfcf);
}
.done {
  width: 450px;
  height: 18px;
  background: linear-gradient(rgba(255,255,255,.75), rgba(255,255,255,.5) 35%, transparent 36%), linear-gradient(to right, #06a82a, #00d328 25px);
}
.actions {
  width: 150px;
  display: flex;
  flex-direction: column;
  gap: 6px;
}
button {
  font-family: inherit;
  font-size: 12px;
  color: #000;
  padding: 0;
}
.actions button {
  height: 23px;
  border: 1px solid #8f8f8f;
  background: #f0f0f0;
  font-size: 11.5px;
  letter-spacing: -0.35px;
}
.actions .start {
  margin-top: 69px;
  font-weight: bold;
  font-size: 12px;
  letter-spacing: -0.2px;
}
.pane-tabs span {
  display: block;
  width: 84px;
  height: 20px;
  margin: -1px 0 0 2px;
  padding-left: 9px;
  line-height: 19px;
  background: #fff;
  border: 1px solid #000;
  border-top: 0;
}
.status {
  height: 23px;
  padding-top: 2px;
  display: flex;
  align-items: center;
}
.status span {
  height: 17px;
  line-height: 18px;
  padding-left: 5px;
  border-left: 1px solid #a8a8a8;
}
.status .hint {
  width: 672px;
  padding-left: 2px;
  border: 0;
  letter-spacing: -0.38px;
}
.status .c1 { width: 116px; letter-spacing: -0.3px; }
.status .c2 { width: 102px; }
.status .c3 { width: 71px; }
.status .c4 { width: 71px; }
.status .c5 { width: 68px; }
.status .c6 { width: 70px; }
.status .c7 { width: 66px; }
.traffic {
  display: flex;
  gap: 2px;
  letter-spacing: -0.3px;
}
.traffic svg {
  margin-top: 2px;
}

/* taskbar */
.taskbar {
  position: relative;
  height: 40px;
  display: flex;
  align-items: center;
  border-top: 1px solid #1b3a5c;
  background: linear-gradient(rgba(255,255,255,.35) 0 1px, rgba(255,255,255,.08) 1px, transparent 50%),
    linear-gradient(to right, #1d5f8e 0, #2480b3 60px, #2f9bd0 140px, #3fa9d8 260px, #3a9ad0 430px, #2c86c9 650px, #2370b9 870px, #1d62ae 1060px, #17477e 1130px, #13365f 1366px);
}
.aurora {
  position: absolute;
  inset: 0;
  filter: blur(1.5px);
}
.taskbar > span {
  position: relative;
  display: flex;
}
.orb { margin-left: 8px; }
.qb { margin-left: 28px; }
.qb text { font-size: 19px; }
.wmp { margin-left: 33px; }
.folder { margin: 0 15px 0 31px; }
.taskbar .task {
  width: 58px;
  height: 39px;
  flex-direction: column;
  align-items: center;
  justify-content: center;
  border: 1px solid #1f4e70;
  border-radius: 3px;
  margin-right: 3px;
  background: linear-gradient(120deg, rgba(255,255,255,.6), rgba(255,255,255,.3) 50%, rgba(255,255,255,.22));
  box-shadow: inset 0 0 0 1px rgba(255,255,255,.55);
}
.taskbar .task.on {
  width: 60px;
  background: linear-gradient(120deg, rgba(255,255,255,.9), rgba(255,255,255,.55) 60%, rgba(255,255,255,.45));
}
.task em {
  font: 11.5px/13px "DejaVu Sans", sans-serif;
  letter-spacing: -0.3px;
  margin-top: -2px;
}
.tray {
  position: relative;
  height: 39px;
  margin-left: auto;
  display: flex;
  align-items: center;
  gap: 13px;
  color: #fff;
}
.lang {
  margin: -6px 3px 0 0;
}
.up-arrow { margin-right: -1px; }
.flag { margin-right: -2px; }
.battery { margin-right: -2px; }
.signal { margin-right: -5px; }
.clock {
  width: 60px;
  margin-left: 3px;
  text-align: center;
  line-height: 17px;
  letter-spacing: -0.7px;
}
.peek {
  width: 14px;
  height: 39px;
  margin-left: -4px;
  border: 1px solid #0c223c;
  background: linear-gradient(135deg, #7d97b5, #2c5078 50%, #18395f);
  box-shadow: inset 0 0 0 1px rgba(255,255,255,.25);
}

/* dialog */
.dialog {
  position: absolute;
  left: 82px;
  top: 30px;
  width: 887px;
  height: 686px;
  border: 1px solid #22303f;
  border-radius: 7px;
  background: repeating-linear-gradient(rgba(90,120,160,0) 0 5px, rgba(90,120,160,.5) 9px, rgba(90,120,160,0) 13px 18px) 0 84px / 7px 308px no-repeat,
    linear-gradient(#5a6064, #c6c9ca) 879px 66px / 7px 122px no-repeat,
    linear-gradient(#1f4a32, #0d151d 20px, #1c2731 130px, #0d151d 210px, #7fa6cf) 879px 188px / 7px 240px no-repeat,
    linear-gradient(#b9dafb, #b9dafb 120px, #a9cdf2) 879px 428px / 7px 258px no-repeat,
    linear-gradient(#b7d2ef 0, #a9cbeb 30px, #d9e6f3 80px, #dbe7f4 185px, #a5c7ec 190px, #b9dafb 440px, #acd0f3);
  box-shadow: 0 0 0 .5px #222, inset 0 0 0 1px rgba(255,255,255,.75), 2px 3px 13px 3px rgba(0,0,0,.8);
  padding: 0 6px 7px 6px;
  font-family: "Liberation Sans", Arial, sans-serif;
}
.caption {
  position: relative;
  height: 28px;
  display: flex;
  align-items: flex-start;
  margin: 0 -6px;
}
.glass {
  position: absolute;
  left: 0;
  top: 0;
  filter: blur(2.5px);
  border-radius: 6px 6px 0 0;
}
.caption span {
  position: relative;
  padding: 6px 14px 6px 7px;
  line-height: 16px;
  font-family: "Open Sans", "Noto Sans", sans-serif;
  letter-spacing: -0.3px;
  background: radial-gradient(ellipse at center, rgba(255,255,255,.5), rgba(255,255,255,0) 75%);
}
.capbtns {
  position: relative;
  margin-left: auto;
  margin-right: 5px;
  display: flex;
  height: 19px;
  border: 1px solid #4b5663;
  border-top: 0;
  border-radius: 0 0 5px 5px;
  overflow: hidden;
}
.capbtns i {
  display: flex;
  align-items: center;
  justify-content: center;
  box-shadow: inset 0 0 0 1px rgba(255,255,255,.45);
}
.help {
  width: 28px;
  border-right: 1px solid #4b5663;
  background: linear-gradient(#dde6ef, #c2cedb 48%, #9fafc1 50%, #b9c9da);
}
.close {
  width: 47px;
  background: linear-gradient(#e3a79b, #d0705f 48%, #b5301c 50%, #cf5a38);
}
.client {
  position: relative;
  height: 650px;
  border: 1px solid #55606e;
  background: #f0f0f0;
  padding: 7px 7px 0 6px;
  letter-spacing: -0.45px;
}
.tabs {
  height: 21px;
  display: flex;
  align-items: flex-end;
  padding-left: 2px;
  position: relative;
  z-index: 1;
}
.tabs span {
  height: 18px;
  width: 83px;
  line-height: 19px;
  text-align: center;
  border: 1px solid #898c95;
  border-bottom: 0;
  background: linear-gradient(#f2f2f2, #ebebeb 50%, #dddddd 50%, #cfcfcf);
  margin-bottom: 1px;
}
.tabs .on {
  width: 120px;
  height: 21px;
  line-height: 19px;
  margin: 0 -1px;
  background: #fff;
  letter-spacing: -0.55px;
}
.tabs span:last-child {
  width: 78px;
}
.page {
  height: 585px;
  width: 859px;
  margin-top: -1px;
  border: 1px solid #898c95;
  background: #fff;
  padding: 9px 8px 0 11px;
  box-shadow: 2px 2px 0 #fff;
}
.list {
  height: 533px;
  padding-left: 1px;
  border: 1px solid #828790;
}
.tr {
  width: 834px;
  height: 20px;
  display: grid;
  grid-template-columns: 277px repeat(4, 139px);
  line-height: 20px;
  border-bottom: 1px solid #c8c8c8;
  letter-spacing: -0.35px;
}
.tr:nth-child(even) {
  background: #ebebeb;
}
.tr span {
  border-right: 1px solid #c8c8c8;
  padding-right: 2px;
  text-align: right;
}
.tr span:last-child {
  border-right: 0;
}
.tr span:first-child {
  display: flex;
  align-items: center;
  text-align: left;
  padding-left: 4px;
}
.tr i {
  width: 12px;
  height: 12px;
  margin: -3px 6px 0 0;
  border: 2px solid #111;
  border-right: 1px solid #ddd;
  border-bottom: 1px solid #ddd;
  background: #fff;
}
.tr:not(.th) span:first-child {
  font-size: 11.5px;
  letter-spacing: -0.45px;
}
.tr.head {
  background: #fff;
}
.tr.head span:last-child {
  border-right: 1px solid #c8c8c8;
}
.head i {
  background: #c0c0c0;
  border-color: #666 #c8c8c8 #c8c8c8 #666;
}
.th {
  height: 25px;
  line-height: 26px;
  background: linear-gradient(#fff 40%, #f4f5f7 42%, #f2f3f5);
  border-color: #d5d5d5;
}
.tr.th span {
  border-color: #e3e4e6;
  padding-right: 5px;
  letter-spacing: -0.6px;
}
.tr.th span:first-child {
  padding-left: 6px;
}
.page-btns, .dlg-btns {
  display: flex;
  justify-content: flex-end;
  gap: 9px;
  margin-top: 9px;
}
.page-btns {
  padding-right: 2px;
}
.dialog button {
  width: 103px;
  height: 21px;
  letter-spacing: -0.35px;
  border: 1px solid #707070;
  border-radius: 3px;
  background: linear-gradient(#f2f2f2, #ebebeb 50%, #dddddd 50%, #cfcfcf);
  box-shadow: inset 0 0 0 1px rgba(255,255,255,.7);
}
.dlg-btns {
  gap: 8px;
  margin-top: 6px;
  padding-right: 2px;
}
.dialog .dlg-btns button {
  width: 73px;
}
.dialog .dlg-btns .ok {
  border-color: #2c7aa8;
  box-shadow: inset 0 0 0 1px #3fcbf2;
  background: linear-gradient(#eff4f6, #e3ebef 50%, #d3dfe6 50%, #cbd9e1);
}
.resize {
  position: absolute;
  right: 2px;
  bottom: 2px;
  width: 9px;
  height: 9px;
  background: radial-gradient(circle at 1px 1px, #b0b0b0 1px, transparent 1.2px) 0 0 / 3px 3px;
  clip-path: polygon(100% 0, 100% 100%, 0 100%);
}
```
